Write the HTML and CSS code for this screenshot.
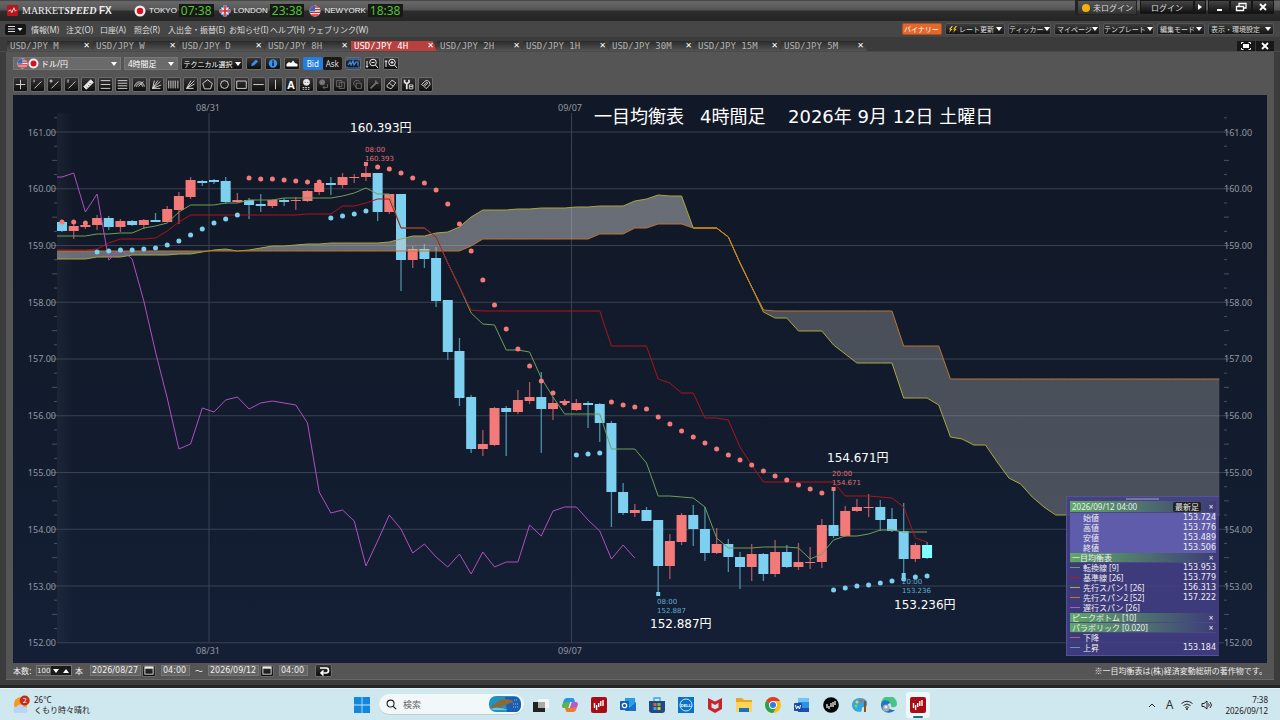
FILE: index.html
```html
<!DOCTYPE html>
<html lang="ja">
<head>
<meta charset="utf-8">
<title>MARKETSPEED FX</title>
<link rel="stylesheet" href="styles.css">
</head>
<body>
<svg class="defs" aria-hidden="true">
  <defs>
    <linearGradient id="edge"><stop offset="0" stop-color="#fff" stop-opacity=".04"/><stop offset="1" stop-color="#fff" stop-opacity="0"/></linearGradient>
    <symbol id="jp" viewBox="0 0 12 12"><circle cx="6" cy="6" r="5.5" fill="#eee"/><circle cx="6" cy="6" r="3.2" fill="#d3121d"/></symbol>
    <symbol id="us" viewBox="0 0 12 12"><circle cx="6" cy="6" r="5.5" fill="#f2f2f2"/><path d="M6 2h4.3M6 4.6h5.3M1 7.4h10.2M2.2 10h7.6" stroke="#d4262e" stroke-width="1.3"/><path d="M6 .5A5.500 5.500 0 0 0 .7 6.300H6z" fill="#3b64b4"/></symbol>
    <symbol id="gb" viewBox="0 0 12 12"><circle cx="6" cy="6" r="5.500" fill="#2b3f92"/><path d="M2.500 2.500l7 7M9.500 2.500l-7 7" stroke="#f4f4f4" stroke-width="1.500"/><path d="M6 .5v11M.5 6h11" stroke="#f4f4f4" stroke-width="3"/><path d="M6 .5v11M.5 6h11" stroke="#d3242f" stroke-width="1.600"/></symbol>
    <symbol id="ms" viewBox="0 0 16 16"><rect width="16" height="16" rx="2" fill="#a80d14"/><path d="M3.500 6v5M5.600 8v5M7.700 6v4M9.800 4v5M12 3v6" stroke="#fff" stroke-width="1.400"/></symbol>
    <symbol id="cal" viewBox="0 0 12 12"><rect x="1.500" y="2" width="9" height="8" fill="none" stroke="#ddd"/><path d="M1.500 3h9" stroke="#eee" stroke-width="2"/></symbol>
  </defs>
</svg>

<div class="window">
  <header class="titlebar">
    <svg class="logo" viewBox="0 0 16 16"><rect width="16" height="16" rx="2" fill="#b8151c"/><path d="M2 9l3-2 2 4 3-7 2 5 2-2" fill="none" stroke="#fff" stroke-width="1.200"/></svg>
    <h1 class="brand">MARKET<em>SPEED</em> <b>FX</b></h1>
    <div class="clocks">
      <div class="clock"><svg><use href="#jp"/></svg><span>TOKYO</span><time>07:38</time></div>
      <div class="clock"><svg><use href="#gb"/></svg><span>LONDON</span><time>23:38</time></div>
      <div class="clock"><svg><use href="#us"/></svg><span>NEWYORK</span><time>18:38</time></div>
    </div>
    <div class="login-status"><i class="lamp"></i>未ログイン</div>
    <button class="login">ログイン</button><button class="login-more" aria-label="ログインメニュー"><i class="tri-right"></i></button>
    <div class="winbtns">
      <button aria-label="最小化"><svg viewBox="0 0 12 10"><path d="M4 8h5" stroke="#fff" stroke-width="2"/></svg></button>
      <button aria-label="元に戻す"><svg viewBox="0 0 12 10"><path d="M4 4V1.500h7V6H8.500M1.500 4.500h7v4h-7z" fill="none" stroke="#fff" stroke-width="1.300"/></svg></button>
      <button aria-label="閉じる"><svg viewBox="0 0 12 10"><path d="M3 2l6 6M9 2L3 8" stroke="#fff" stroke-width="1.800"/></svg></button>
    </div>
  </header>

  <nav class="menubar">
    <button class="menu-main" aria-label="メニュー"><svg viewBox="0 0 20 10"><path d="M3 2.500h7M3 5h7M3 7.500h7" stroke="#ddd"/><path d="M12.500 4h5L15 7z" fill="#fff"/></svg></button>
    <div class="menus">
      <button>情報(M)</button><button>注文(O)</button><button>口座(A)</button><button>照会(R)</button><button>入出金・振替(E)</button><button>お知らせ(I)</button><button>ヘルプ(H)</button><button>ウェブリンク(W)</button>
    </div>
    <div class="quick">
      <button class="q0">バイナリー</button>
      <button class="q1"><svg viewBox="0 0 10 10"><path d="M4 1L1 5h1.700L1 9l4-4.600H3.300L5.500 1zM8.500 1l-3 4h1.700L5.500 9l4-4.600H7.800L10 1z" fill="#f7c21a"/></svg>レート更新<i class="tri"></i></button>
      <button class="q2">ティッカー<i class="tri"></i></button>
      <button class="q3">マイページ<i class="tri"></i></button>
      <button class="q4">テンプレート<i class="tri"></i></button>
      <button class="q5">編集モード<i class="tri"></i></button>
      <button class="q6">表示・環境設定<i class="tri"></i></button>
    </div>
  </nav>

  <div class="tabs">
    <div class="tab"><button>USD/JPY M</button><button aria-label="閉じる" class="x">✕</button></div>
    <div class="tab"><button>USD/JPY W</button><button aria-label="閉じる" class="x">✕</button></div>
    <div class="tab"><button>USD/JPY D</button><button aria-label="閉じる" class="x">✕</button></div>
    <div class="tab"><button>USD/JPY 8H</button><button aria-label="閉じる" class="x">✕</button></div>
    <div class="tab active"><button>USD/JPY 4H</button><button aria-label="閉じる" class="x">✕</button></div>
    <div class="tab"><button>USD/JPY 2H</button><button aria-label="閉じる" class="x">✕</button></div>
    <div class="tab"><button>USD/JPY 1H</button><button aria-label="閉じる" class="x">✕</button></div>
    <div class="tab"><button>USD/JPY 30M</button><button aria-label="閉じる" class="x">✕</button></div>
    <div class="tab"><button>USD/JPY 15M</button><button aria-label="閉じる" class="x">✕</button></div>
    <div class="tab"><button>USD/JPY 5M</button><button aria-label="閉じる" class="x">✕</button></div>
    <div class="tabtools">
      <button aria-label="最大化"><svg viewBox="0 0 18 10"><rect x="6" y="3" width="6" height="4" fill="#fff"/><path d="M4.500 3V1.500h2M11.500 1.500h2V3M13.500 7v1.500h-2M6.500 8.500h-2V7" fill="none" stroke="#fff"/></svg></button>
      <button aria-label="閉じる"><svg viewBox="0 0 18 10"><path d="M6 2l6 6M12 2L6 8" stroke="#fff" stroke-width="1.800"/></svg></button>
    </div>
  </div>

  <main class="panel">
    <div class="bar">
      <label class="pick pair"><svg><use href="#us"/></svg><svg><use href="#jp"/></svg><select aria-label="通貨ペア"><option>ドル/円</option></select><i class="tri"></i></label>
      <label class="pick span"><select aria-label="足種"><option>4時間足</option></select><i class="tri"></i></label>
      <button class="btn tech">テクニカル選択<i class="tri"></i></button>
      <button class="btn" aria-label="描画"><svg viewBox="0 0 16 13"><path d="M5 9l1-2.500 4-4L12 4.500l-4 4z" fill="#3f8ee8"/></svg></button>
      <button class="btn" aria-label="情報"><svg viewBox="0 0 16 13"><circle cx="8" cy="6.500" r="4.200" fill="#3794f0"/><path d="M8 5.500v3.500M8 3.500v1.200" stroke="#111" stroke-width="1.500"/></svg></button>
      <button class="btn" aria-label="チャート種類"><svg viewBox="0 0 16 13"><path d="M2.500 9.500V7L5 5l2 1 2-2.500L11 6l2.500 1v2.500z" fill="#fff"/></svg></button>
      <div class="pair-btn"><button class="on">Bid</button><button>Ask</button></div>
      <button class="btn" aria-label="比較"><svg viewBox="0 0 16 13"><path d="M2 3.500V2h12v1.500M2 9.500V11h12V9.500M3 8l2-3 1 3 2-4 1 4 2-3 2 0v4" fill="none" stroke="#3f8ee8" stroke-width="1.200"/></svg></button>
      <button class="btn" aria-label="縮小"><svg viewBox="0 0 16 13"><circle cx="9" cy="5.500" r="3.300" fill="none" stroke="#eee"/><path d="M7.500 5.500h3M11.500 8l2.500 3M3 4v6M2 9l1 1.500L4 9" stroke="#eee" fill="none"/></svg></button>
      <button class="btn" aria-label="拡大"><svg viewBox="0 0 16 13"><circle cx="9" cy="5.500" r="3.300" fill="none" stroke="#eee"/><path d="M7.500 5.500h3M9 4v3M11.500 8l2.500 3M3 10V4M2 5l1-1.500L4 5" stroke="#eee" fill="none"/></svg></button>
    </div>
    <div class="tools">
      <button class="btn" aria-label="十字線"><svg viewBox="0 0 15 15"><path d="M2 7.500h11M7.500 2v11"/></svg></button>
      <button class="btn" aria-label="線1"><svg viewBox="0 0 15 15"><path d="M4 12l8-8M3.500 2v3"/></svg></button>
      <button class="btn" aria-label="線2"><svg viewBox="0 0 15 15"><path d="M4 12l8-8M2.500 2.500h2v2h-2z"/></svg></button>
      <button class="btn" aria-label="線3"><svg viewBox="0 0 15 15"><path d="M4 12l8-8M2.500 2.500h2M2.500 4.500h2"/></svg></button>
      <button class="btn" aria-label="定規"><svg viewBox="0 0 15 15"><path d="M2 10l8-8 3 3-8 8z" fill="#eee"/><path d="M5 10l1 1M7 8l1 1M9 6l1 1" stroke="#333"/></svg></button>
      <button class="btn" aria-label="平行線"><svg viewBox="0 0 15 15"><path d="M2 3h11M2 7.500h11M2 12h11"/></svg></button>
      <button class="btn" aria-label="リトレースメント"><svg viewBox="0 0 15 15"><path d="M2 3h11M2 6h11M2 9h11M2 12h11"/></svg></button>
      <button class="btn" aria-label="アーク"><svg viewBox="0 0 15 15"><path d="M2 10a5.500 5.500 0 0 1 11 0M4 10a3.500 3.500 0 0 1 7 0M6 10l6-6"/></svg></button>
      <button class="btn" aria-label="ファン"><svg viewBox="0 0 15 15"><path d="M3 12L5 3M3 12l6-9M3 12l9-8M3 12l10-4M3 12h9"/></svg></button>
      <button class="btn" aria-label="タイムゾーン"><svg viewBox="0 0 15 15"><path d="M2 3v9M4.500 3v9M7 3v9M9.500 3v9M12.500 3v9"/></svg></button>
      <button class="btn" aria-label="ギャンファン"><svg viewBox="0 0 15 15"><path d="M3 12l5-9M3 12l9-9M3 12l9-5M3 12h8"/></svg></button>
      <button class="btn" aria-label="五角形"><svg viewBox="0 0 15 15"><path d="M7.500 2l5.500 4.300-2 6.200H4L2 6.300z"/></svg></button>
      <button class="btn" aria-label="円"><svg viewBox="0 0 15 15"><circle cx="7.500" cy="7.500" r="4.500"/></svg></button>
      <button class="btn" aria-label="四角形"><svg viewBox="0 0 15 15"><path d="M2 3.500h11v8.500H2z"/></svg></button>
      <button class="btn" aria-label="水平線"><svg viewBox="0 0 15 15"><path d="M1.500 7.500h12"/></svg></button>
      <button class="btn" aria-label="垂直線"><svg viewBox="0 0 15 15"><path d="M7.500 2v11"/></svg></button>
      <button class="btn letter">A</button>
      <button class="btn" aria-label="アイコン"><svg viewBox="0 0 15 15"><circle cx="7.500" cy="5" r="3.500" fill="#eee"/><path d="M5.500 5h1M8.500 5h1" stroke="#222"/><path d="M3 11h9M3 13h9" stroke-dasharray="2 1"/></svg></button>
      <button class="btn off" aria-label="色"><svg viewBox="0 0 15 15"><circle cx="6" cy="5" r="3" fill="#777"/><path d="M12 7v4H7M9 9l-2 2 2 2"/></svg></button>
      <button class="btn off" aria-label="複製"><svg viewBox="0 0 15 15"><path d="M3 3h6v7H3zM6 5h6v7H6z"/></svg></button>
      <button class="btn off" aria-label="全複製"><svg viewBox="0 0 15 15"><path d="M3 7a4 4 0 0 1 7-3M3 7l4 5M6 6h6v6H6z"/></svg></button>
      <button class="btn off" aria-label="設定"><svg viewBox="0 0 15 15"><path d="M3 12l6-6M9 3v3h3" stroke-width="2"/></svg></button>
      <button class="btn" aria-label="消去"><svg viewBox="0 0 15 15"><path d="M2.500 8.500l5.500-6 4.500 3-5.500 7-4.500-2zM5 6l4.500 3.500"/></svg></button>
      <button class="btn" aria-label="一覧設定"><svg viewBox="0 0 15 15"><path d="M3 2v3l2.500 1.500V13M8 2v3L5.500 6.500" stroke-width="2"/><path d="M8.500 8h4v4.500h-4zM8.500 10h4"/></svg></button>
      <button class="btn" aria-label="マグネット"><svg viewBox="0 0 15 15"><path d="M3 7.500l4-4q3-2 5 1t-1 5l-3 3M5 9l4-4q1 0 1 1l-4 4M3 7.500L5 9M6 10l2 2"/></svg></button>
    </div>

    <section class="chart">
      <svg class="plot" viewBox="13 95 1254 568" role="img" aria-label="USD/JPY 4時間足チャート">
        <g id="grid"></g>
        <g id="candles"></g>
        <g id="cloud"></g>
        <g id="lines"></g>
        <g id="dots"></g>
        <g class="axis left">
          <text x="56" y="136">161.00</text><text x="56" y="192">160.00</text><text x="56" y="249">159.00</text><text x="56" y="306">158.00</text><text x="56" y="362">157.00</text><text x="56" y="419">156.00</text><text x="56" y="476">155.00</text><text x="56" y="533">154.00</text><text x="56" y="590">153.00</text><text x="56" y="646">152.00</text>
        </g>
        <g class="axis right">
          <text x="1224" y="136">161.00</text><text x="1224" y="192">160.00</text><text x="1224" y="249">159.00</text><text x="1224" y="306">158.00</text><text x="1224" y="362">157.00</text><text x="1224" y="419">156.00</text><text x="1224" y="476">155.00</text><text x="1224" y="533">154.00</text><text x="1224" y="590">153.00</text><text x="1224" y="646">152.00</text>
        </g>
        <g class="axis mid">
          <text x="208" y="111">08/31</text><text x="570" y="111">09/07</text><text x="208" y="654">08/31</text><text x="570" y="654">09/07</text>
        </g>
        <g class="peak up"><text x="365" y="152">08:00</text><text x="365" y="161">160.393</text><text x="832" y="476">20:00</text><text x="832" y="485">154.671</text></g>
        <g class="peak down"><text x="657" y="604">08:00</text><text x="657" y="613">152.887</text><text x="902" y="584">20:00</text><text x="902" y="593">153.236</text></g>
        <g class="note"><text x="350" y="132">160.393円</text><text x="827" y="462">154.671円</text><text x="650" y="628">152.887円</text><text x="894" y="609">153.236円</text></g>
        <g class="heading"><text x="594" y="123">一目均衡表</text><text x="700" y="123">4時間足</text><text x="788" y="123">2026年 9月 12日 土曜日</text></g>
      </svg>
      <aside class="legend">
        <i class="grip"></i>
        <div class="cap first"><span>2026/09/12 04:00</span><button class="latest">最新足</button><button aria-label="閉じる">×</button></div>
        <dl class="ohlc">
          <div><dt>始値</dt><dd>153.724</dd></div><div><dt>高値</dt><dd>153.776</dd></div><div><dt>安値</dt><dd>153.489</dd></div><div><dt>終値</dt><dd>153.506</dd></div>
        </dl>
        <div class="cap"><span>一目均衡表</span><button aria-label="閉じる">×</button></div>
        <dl>
          <div class="k green"><dt>転換線 [9]</dt><dd>153.953</dd></div>
          <div class="k red"><dt>基準線 [26]</dt><dd>153.779</dd></div>
          <div class="k yellow"><dt>先行スパン1 [26]</dt><dd>156.313</dd></div>
          <div class="k orange"><dt>先行スパン2 [52]</dt><dd>157.222</dd></div>
          <div class="k violet"><dt>遅行スパン [26]</dt><dd></dd></div>
        </dl>
        <div class="cap"><span>ピークボトム [10]</span><button aria-label="閉じる">×</button></div>
        <div class="cap"><span>パラボリック [0.020]</span><button aria-label="閉じる">×</button></div>
        <dl>
          <div class="k pink"><dt>下降</dt><dd></dd></div>
          <div class="k blue"><dt>上昇</dt><dd>153.184</dd></div>
        </dl>
      </aside>
    </section>

    <form class="range">
      <label for="bars">本数:</label>
      <span class="spin"><input id="bars" value="100"><button type="button" aria-label="減らす"><i class="tri"></i></button><button type="button" aria-label="増やす"><i class="tri flip"></i></button></span>
      <span class="unit">本</span>
      <input class="date" aria-label="開始日" value="2026/08/27"><button type="button" class="btn cal" aria-label="開始日カレンダー"><svg><use href="#cal"/></svg></button>
      <input class="hour" aria-label="開始時刻" value="04:00">
      <span class="tilde">～</span>
      <input class="date" aria-label="終了日" value="2026/09/12"><button type="button" class="btn cal" aria-label="終了日カレンダー"><svg><use href="#cal"/></svg></button>
      <input class="hour" aria-label="終了時刻" value="04:00">
      <button type="button" class="btn back" aria-label="戻す"><svg viewBox="0 0 16 12"><path d="M4 3h6q2.500 0 2.500 2.500T10 8H6M7.500 5.500L5 8l2.500 2.500" fill="none" stroke="#fff" stroke-width="1.600"/></svg></button>
      <small>※一目均衡表は(株)経済変動総研の著作物です。</small>
    </form>
  </main>
</div>

<footer class="taskbar">
  <div class="weather">
    <svg viewBox="0 0 20 22"><circle cx="8.500" cy="10" r="7.500" fill="#f79a1c"/><path d="M4 20a3.500 3.500 0 0 1 0-7 4.500 4.500 0 0 1 8 0 3.500 3.500 0 0 1 1 7z" fill="#b9d3fa"/><circle cx="13" cy="6" r="5.500" fill="#c42b1c"/><text x="13" y="9" class="badge">2</text></svg>
    <p><b>26°C</b><span>くもり時々晴れ</span></p>
  </div>
  <div class="apps">
    <button aria-label="スタート"><svg viewBox="0 0 16 16"><path d="M0 0h7.600v7.600H0zM8.400 0H16v7.600H8.400zM0 8.400h7.600V16H0zM8.400 8.400H16V16H8.400z" fill="#1287dd"/></svg></button>
    <label class="search"><svg viewBox="0 0 12 12"><circle cx="5" cy="5" r="3.800" fill="none" stroke="#222" stroke-width="1.200"/><path d="M8 8l3 3" stroke="#222" stroke-width="1.400"/></svg><input placeholder="検索" aria-label="検索"><svg class="fish" viewBox="0 0 32 16"><rect width="32" height="16" rx="7" fill="#2191c6"/><path d="M16 1h12q4 3 4 8t-4 7H18z" fill="#1b5db0"/><path d="M2 11q6-5 9-7 8-3 14 2-2 1-4 1-4 3-9 3l2 4-5-3q-4 0-7 2z" fill="#8b6a3a"/><path d="M1 13q8-3 18 1h-14z" fill="#6cc5d8"/><path d="M25 4h4M24 8h6M24 11h5" stroke="#8bc4ee" stroke-dasharray="1 1"/></svg></label>
    <button aria-label="タスクビュー"><svg viewBox="0 0 16 16"><rect x="5" y="2" width="11" height="9" fill="#f4f4f4"/><rect y="5" width="12" height="10" fill="#222"/><rect x="5" y="5" width="7" height="6" fill="#aaa"/></svg></button>
    <button aria-label="Copilot"><svg viewBox="0 0 16 16"><path d="M5 1h6q1 0 2 4H8L6 11H2Q-1 11 1 6 2 1 5 1z" fill="#2596e8"/><path d="M1 6q-2 5 2 5h3l2-6H5z" fill="#62b53f"/><path d="M11 15H5q-1 0-2-4h5l2-6h4q3 0 1 5-1 5-4 5z" fill="#f07a2b"/><path d="M15 10q2-5-2-5h-3l-2 6z" fill="#b856d8"/></svg></button>
    <button aria-label="MARKETSPEED"><svg><use href="#ms"/></svg></button>
    <button aria-label="Outlook"><svg viewBox="0 0 16 16"><path d="M5 1h10v9H5z" fill="#2a9be6"/><path d="M5 6l5 3 6-4v9H5z" fill="#58c1f5"/><path d="M5 14l11-9v9z" fill="#1672c8"/><rect y="4" width="9" height="9" rx="1" fill="#0d5eb8"/><circle cx="4.500" cy="8.500" r="2.200" fill="none" stroke="#fff" stroke-width="1.300"/></svg></button>
    <button aria-label="Store"><svg viewBox="0 0 16 16"><path d="M5 4V1h6v3" fill="none" stroke="#36a3e8" stroke-width="1.300"/><path d="M0 4h16v9q0 3-3 3H3q-3 0-3-3z" fill="#204a80"/><path d="M4.500 6h3v3h-3z" fill="#e85b35"/><path d="M8.500 6h3v3h-3z" fill="#74bb3f"/><path d="M4.500 10h3v3h-3z" fill="#35a9ee"/><path d="M8.500 10h3v3h-3z" fill="#f5bd2d"/></svg></button>
    <button aria-label="Dell"><svg viewBox="0 0 16 16"><rect width="16" height="16" fill="#0b72c9"/><circle cx="8" cy="8" r="6" fill="none" stroke="#fff" stroke-width=".8"/><text x="8" y="10" class="dell">DELL</text></svg></button>
    <button aria-label="McAfee"><svg viewBox="0 0 16 16"><path d="M1 1l7 3.500L15 1v11l-7 4-7-4z" fill="#c8242e"/><path d="M4.500 6L8 8l3.500-2v4.500L8 12.300l-3.500-1.800z" fill="#d1e7ee"/></svg></button>
    <button aria-label="エクスプローラー"><svg viewBox="0 0 16 16"><path d="M0 1h6l2 2h8v12H0z" fill="#e6a61d"/><path d="M0 5h16v10H0z" fill="#fcd45c"/><path d="M3 15v-4h10v4z" fill="#1474c4"/></svg></button>
    <button aria-label="Chrome"><svg viewBox="0 0 16 16"><circle cx="8" cy="8" r="8" fill="#fbc116"/><path d="M8 8L1.100 4A8 8 0 0 1 15 4H8z" fill="#e33b2e"/><path d="M8 8L1.100 4A8 8 0 0 0 8 16l3.500-6z" fill="#2da04e"/><circle cx="8" cy="8" r="3.900" fill="#fff"/><circle cx="8" cy="8" r="3" fill="#3478e5"/></svg></button>
    <button aria-label="Word"><svg viewBox="0 0 16 16"><rect x="4" y="1" width="11" height="14" fill="#2b93e5"/><path d="M4 1h11v4H4z" fill="#70c4f7"/><path d="M4 11h11v4H4z" fill="#224caf"/><rect y="6" width="8" height="8" rx="1" fill="#174bab"/><path d="M1.500 8l1 4L4 9l1.500 3 1-4" fill="none" stroke="#fff"/></svg></button>
    <button aria-label="MARKETSPEED II"><svg viewBox="0 0 16 16"><circle cx="8" cy="8" r="7.800" fill="#050505"/><path d="M4 7v4M6 9v3M8 6v4M10 5v5M12 4v4" stroke="#fff" stroke-width="1.200"/></svg></button>
    <button aria-label="ペイント"><svg viewBox="0 0 16 16"><path d="M8 1c5 0 8 3 7 7-1 3-4 1-5 3s1 3-2 4C3 15 0 12 0 8s3-7 8-7z" fill="#35a7df"/><circle cx="5" cy="5" r="1.500" fill="#f7d13a"/><circle cx="9" cy="4" r="1.500" fill="#ef553a"/><circle cx="4" cy="9" r="1.500" fill="#7bd357"/><path d="M13 4v11" stroke="#8e4f22" stroke-width="2"/></svg></button>
    <button aria-label="Edge"><svg viewBox="0 0 16 16"><path d="M0 7a8 8 0 0 1 16 0c0 4-6 4-6 2 1-4-7-5-10-2z" fill="#4ac483"/><path d="M0 8c0-6 8-6 9-2-4 1-3 7 5 7-5 5-14 3-14-5z" fill="#1a77ca"/><circle cx="5" cy="11" r="3.500" fill="#aaa"/><circle cx="5" cy="10" r="1.500" fill="#eee"/></svg></button>
    <button aria-label="MARKETSPEED FX" class="current"><svg><use href="#ms"/></svg></button>
  </div>
  <div class="tray">
    <svg viewBox="0 0 12 12"><path d="M3 8l3-3 3 3" fill="none" stroke="#222"/></svg>
    <span class="ime">A</span>
    <svg viewBox="0 0 12 12"><path d="M.5 4.500q5.500-4.500 11 0M2.500 6.500q3.500-3 7 0M4.200 8.500q1.800-1.600 3.600 0" fill="none" stroke="#222"/><circle cx="6" cy="10" r="1" fill="#222"/></svg>
    <svg viewBox="0 0 12 12"><path d="M1 4.500h2l3-2.500v8L3 7.500H1zM7.500 4.500q1.500 1.500 0 3M9 3q3 3 0 6" fill="none" stroke="#222"/></svg>
    <p>7:38<br>2026/09/12</p>
  </div>
</footer>
<script src="script.js"></script>
</body>
</html>
```
FILE: styles.css
```css
* { box-sizing: border-box; }
body { margin: 0; min-height: 100vh; display: flex; flex-direction: column; background: #cfe7ee; font-family: "Noto Sans", "Noto Sans CJK JP", sans-serif; font-size: 8px; color: #ddd; }
button, input, select { font: inherit; color: inherit; margin: 0; padding: 0; border: 0; background: none; white-space: nowrap; }
input { min-width: 0; }
h1, p, dl, dd { margin: 0; }
.defs { position: absolute; width: 0; height: 0; }
svg { display: block; flex: none; }
.window { flex: 1; display: flex; flex-direction: column; background: #3c3c3c; border-bottom: 3px solid #252525; border-radius: 4px 4px 0 0; padding-bottom: 5px; }

.tri { flex: none; width: 0; height: 0; border: 3px solid transparent; border-top: 4px solid #fff; border-bottom: 0; }
.tri.flip { border-top: 0; border-bottom: 4px solid #fff; }
.tri-right { width: 0; height: 0; border: 3px solid transparent; border-left: 4px solid #fff; border-right: 0; }

.titlebar { height: 21px; display: flex; align-items: center; padding: 0 6px 0 7px; background: linear-gradient(#3b3b3b, #686868 8%, #555 45%, #2c2c2c 55%, #252525); }
.logo { width: 11px; height: 11px; }
.brand { margin-left: 4px; width: 112px; font: 10px "Liberation Serif", serif; color: #eee; white-space: nowrap; }
.brand em { font-weight: bold; }
.brand b { font-family: "Liberation Sans", sans-serif; }
.clocks { flex: 1; display: flex; gap: 5px; }
.clock { display: flex; align-items: center; font: 8px "Liberation Sans", sans-serif; color: #f0f0f0; }
.clock svg { width: 12px; height: 12px; margin-right: 3px; }
.clock time { margin-left: 2px; padding: 0 2px; font: 12px/13px "Noto Sans", sans-serif; color: #58c03c; background: #151a14; }
.login-status { display: flex; align-items: center; gap: 3px; width: 62px; height: 15px; padding-left: 4px; margin-bottom: 6px; background: linear-gradient(#555, #333); border: 1px solid #222; border-left: 3px solid #222; }
.lamp { width: 8px; height: 8px; border-radius: 50%; background: #f5ae10; }
.login, .login-more, .winbtns button { height: 14px; margin-bottom: 7px; background: linear-gradient(#444, #111); border: 1px solid #161616; }
.login { margin-left: 3px; width: 54px; }
.login-more { width: 12px; display: grid; place-items: center; }
.winbtns { display: flex; margin-left: 2px; }
.winbtns button { width: 22px; display: grid; place-items: center; }
.winbtns svg { width: 12px; height: 10px; }

.menubar { height: 16px; display: flex; align-items: center; padding: 0 6px 0 5px; background: #464646; }
.menu-main { width: 21px; height: 11px; background: #161616; border-radius: 2px; }
.menu-main svg { width: 20px; height: 10px; }
.menus { flex: 1; display: grid; grid-template-columns: 35px 34px 34px 34px 61px 41px 38px auto; margin-left: 5px; }
.menus button { text-align: left; }
.quick { display: flex; gap: 3px; font-size: 7px; }
.quick button { display: flex; align-items: center; justify-content: space-between; height: 12px; padding: 0 2px; background: linear-gradient(#3d3d3d, #141414); border: 1px solid #555; border-radius: 2px; }
.quick svg { width: 9px; height: 9px; }
.quick .q0 { width: 40px; padding: 0 1px; background: #e2692c; border-color: #b44d1c; color: #fff; }
.q1 { width: 60px; } .q2 { width: 43px; } .q3 { width: 46px; } .q4 { width: 51px; } .q5 { width: 48px; } .q6 { width: 66px; }
.quick .q2, .quick .q4 { padding: 0; }

.tabs { display: flex; height: 15px; padding: 4px 6px 0 7px; background: #3b3b3b; border-bottom: 1px solid #4a4a4a; }
.tab { width: 86px; display: flex; align-items: center; justify-content: space-between; padding: 0 3px; font: 9px/10px "DejaVu Sans Mono", monospace; color: #b2b2b2; background: linear-gradient(#2a2a2a, #535353); clip-path: polygon(0 0, 95% 0, 100% 100%, 0 100%); }
.tab .x { font: bold 8px/10px "DejaVu Sans", sans-serif; color: #fff; }
.tab.active { background: #b8403f; color: #fff; }
.tabtools { margin-left: auto; display: flex; gap: 1px; }
.tabtools button { width: 18px; height: 10px; background: #171717; }
.tabtools svg { width: 18px; height: 10px; }

.panel { flex: 1; display: flex; flex-direction: column; margin: 0 6px; padding: 5px 7px 0; background: #555; border-bottom: 1px solid #666; }
.bar { display: flex; height: 13px; gap: 3px; }
.btn { display: flex; align-items: center; justify-content: center; background: linear-gradient(#353535, #0e0e0e); border: 1px solid #6a6a6a; border-radius: 2px; }
.bar > .btn { width: 16px; }
.bar .btn svg { width: 16px; height: 13px; }
.pick { display: flex; align-items: center; background: #6a6a6a; border: 1px solid #777; padding: 0 3px; }
.pick svg { width: 11px; height: 11px; }
.pick select { flex: 1; min-width: 0; appearance: none; color: #fff; }
.pair { width: 108px; }
.pair select { padding-left: 2px; }
.span { width: 54px; }
.bar > .tech { width: 62px; font-size: 7px; gap: 2px; color: #fff; }
.pair-btn { display: flex; width: 39px; }
.pair-btn button { flex: 1; background: #191919; border-radius: 2px; }
.pair-btn .on { background: #237ee0; color: #fff; }
.tools { display: grid; grid-template-columns: repeat(25, 1fr); column-gap: 2px; width: 420px; margin: 7px 0 3px; }
.tools .btn { height: 15px; }
.tools svg { width: 13px; height: 13px; fill: none; stroke: #e4e4e4; }
.tools .off svg { stroke: #707070; }
.letter { font: bold 11px "Liberation Sans", sans-serif; color: #fff; }

.chart { position: relative; background: linear-gradient(#111827, #121b2c 50%, #141f36); }
.plot { width: 100%; height: auto; }
.axis { fill: #9498a0; font-size: 9px; }
.left { text-anchor: end; }
.mid { text-anchor: middle; }
.peak { font: 7px "DejaVu Sans", sans-serif; }
.up { fill: #e06c70; }
.down { fill: #5db0d0; }
.note, .heading { fill: #fff; font-family: "DejaVu Sans", "Noto Sans CJK JP", sans-serif; font-size: 12px; }
.heading { font-size: 18px; }

.legend { position: absolute; right: 48px; bottom: 7px; width: 153px; padding: 4px 3px 2px; background: rgba(68, 64, 136, .88); border: 1px solid #55529a; border-right: 0; font-size: 8px; line-height: 10px; color: #eee; }
.grip { position: absolute; top: 1px; left: 59px; width: 33px; height: 2px; background: #77759f; }
.cap { display: flex; align-items: center; height: 10px; padding-left: 2px; background: linear-gradient(90deg, #5fa866, #3d3b78); border-bottom: 1px solid #4a4985; white-space: nowrap; overflow: hidden; }
.cap.first { height: 12px; }
.cap span { flex: 1; }
.cap button { width: 10px; line-height: 8px; }
.cap .latest { width: 28px; margin-right: 5px; background: #222; border-radius: 2px; line-height: 10px; }
.legend dl div { display: flex; justify-content: space-between; height: 10px; padding-left: 13px; white-space: nowrap; overflow: hidden; }
.legend dd { font-family: "DejaVu Sans", sans-serif; }
.ohlc { background: #5f5cab; }
.legend .k { padding-left: 0; }
.k::before { content: ""; width: 10px; height: 1px; margin: 4px 3px 0 0; background: currentColor; }
.k dt { flex: 1; }
.k dt, .k dd { color: #eee; }
.green { color: #69a05c; } .red { color: #b01822; } .yellow { color: #b2ad3b; } .orange { color: #c57629; } .violet { color: #c04fd0; } .pink { color: #b06078; } .blue { color: #5f96c8; }

.range { display: flex; align-items: center; height: 15px; font: 8px "DejaVu Sans", "Noto Sans CJK JP", sans-serif; color: #eee; white-space: nowrap; }
.range > label { width: 23px; }
.spin { display: flex; width: 36px; height: 11px; border: 1px solid #777; }
.spin input { width: 14px; font-size: 7px; }
.spin button { width: 10px; display: grid; place-items: center; background: #1a1a1a; }
.unit { margin: 0 7px 0 3px; }
.date, .hour { height: 11px; background: #646464; border: 1px solid #777; }
.date { width: 51px; padding: 0 1px; }
.hour { width: 29px; padding: 0 1px; margin-left: 5px; }
.cal { width: 14px; height: 12px; margin-left: 1px; }
.cal svg { width: 12px; height: 11px; }
.tilde { margin: 0 5px; }
.back { width: 17px; height: 13px; margin-left: 7px; }
.back svg { width: 16px; height: 12px; }
.range small { margin-left: auto; font: 8px "Noto Sans CJK JP", sans-serif; }

.taskbar { height: 32px; flex: none; display: grid; grid-template-columns: 1fr auto 1fr; align-items: center; background: #cfe7ee; color: #222; border-top: 1px solid #e1f0f4; }
.weather { display: flex; align-items: center; gap: 3px; padding-left: 13px; line-height: 10px; }
.weather svg { width: 18px; height: 20px; }
.weather b, .weather span { display: block; font-weight: normal; }
.badge { font-size: 8px; fill: #fff; text-anchor: middle; }
.apps { display: flex; align-items: center; gap: 5px; }
.apps button { width: 24px; height: 26px; display: grid; place-items: center; position: relative; }
.apps button svg { width: 16px; height: 16px; }
.apps .current { background: #eef7f9; border-radius: 3px; }
.current::after { content: ""; position: absolute; bottom: 0; left: 7px; width: 10px; height: 2px; border-radius: 1px; background: #187585; }
.dell { font: bold 4px "Liberation Sans", sans-serif; fill: #fff; text-anchor: middle; }
.search { display: flex; align-items: center; gap: 6px; width: 145px; height: 21px; padding: 0 3px 0 7px; border-radius: 11px; background: #f2f8fa; border-bottom: 1px solid #bdd0d6; }
.search svg { width: 11px; height: 11px; }
.search .fish { width: 32px; height: 16px; }
.search input { flex: 1; font-size: 9px; color: #333; }
.search input::placeholder { color: #666; opacity: 1; }
.tray { display: flex; align-items: center; justify-content: flex-end; gap: 8px; padding-right: 12px; }
.tray svg { width: 12px; height: 12px; }
.tray p { margin-left: 4px; text-align: right; line-height: 11px; }
.ime { font-size: 12px; color: #333; }
```
FILE: script.js
```js
const X0 = 62, STEP = 11.69;
const x = i => X0 + STEP * i;
// [kind, high, body top, body bottom, low] on the price scale of the plot; u = rise, d = fall, n = newest bar
const bars = [
['d',222,222,231,232],['u',224,226,231,239],['u',222,225,227,229],['u',215,218,225,230],['d',216,218,227,230],['u',219,221,227,232],['d',220,221,225,226],['u',219,220,225,229],['d',213,220,222,222],['u',206,209,222,222],
['u',192,196,210,224],['u',177,180,197,199],['d',180,181,183,186],['d',179,180,182,184],['d',177,181,202,204],['u',193,200,202,203],['d',198,200,205,219],['d',194,204,206,212],['u',199,200,206,208],['d',198,200,202,206],
['u',197,200,201,210],['u',190,191,201,202],['u',180,183,192,195],['d',177,183,185,195],['u',173,177,185,188],['u',174,177,178,183],['u',164,173,177,181],['d',173,173,212,221],['u',194,194,212,214],['d',194,194,260,291],
['u',246,249,260,268],['d',244,249,259,268],['d',247,258,301,307],['d',300,300,352,360],['d',338,351,398,406],['d',395,397,449,453],['u',430,444,449,456],['u',407,408,445,446],['d',406,408,412,456],['u',390,400,412,414],
['u',382,397,401,404],['d',372,397,409,453],['u',397,403,409,420],['u',399,401,403,405],['u',399,403,410,411],['d',401,403,405,428],['d',403,404,423,442],['d',421,423,492,527],['d',483,492,513,515],['u',504,510,513,517],
['d',507,510,521,521],['d',520,520,566,594],['u',534,541,566,579],['u',513,515,542,545],['d',505,515,529,546],['d',507,529,553,561],['u',528,544,553,554],['d',539,544,557,572],['d',552,557,567,589],['u',544,554,567,581],
['d',553,554,574,581],['u',540,552,574,577],['d',545,552,567,568],['u',543,562,567,570],['u',547,562,563,569],['u',519,525,562,568],['d',489,525,536,538],['u',506,511,536,537],['u',499,507,511,512],['u',494,507,508,517],
['d',500,507,520,531],['d',508,519,531,532],['d',503,531,559,575],['u',543,545,559,562],['n',542,545,558,559]];

const tenkan = [236,236,236,234,234,233,233,228,226,223,212,205,205,205,203,203,200,200,200,198,198,198,198,198,196,193,188,194,194,228,228,228,237,263,287,313,324,325,350,350,352,378,397,414,414,414,414,449,449,449,463,496,496,497,498,507,538,548,548,548,547,547,547,548,559,554,540,536,536,534,530,530,532,532,532];
const kijun = [250,250,250,249,243,239,239,239,238,231,222,215,215,215,215,215,215,215,215,215,215,214,214,214,206,206,203,199,199,228,228,228,237,263,287,310,311,311,311,311,311,311,311,311,311,311,311,346,346,346,346,379,383,393,393,418,418,420,447,465,482,482,482,482,482,482,482,496,496,496,497,498,507,538,542];
const spanA = [259,259,259,257,257,257,255,255,255,255,254,254,252,250,249,251,250,248,246,246,245,244,244,243,243,243,243,243,242,239,236,236,233,232,227,217,210,210,210,209,209,208,208,208,207,207,206,206,206,201,199,195,196,196,228,228,228,237,263,287,312,318,318,331,331,331,345,354,363,363,363,363,398,398,398,405,437,439,445,445,462,478,484,497,507,515,515,515,515,515,515,515,515,515,515,515,515,515,515,515];
const spanB = [];
const flat = (from, to, y) => { for (let i = from; i <= to; i++) spanB[i] = y; };
flat(0, 34, 251); flat(35, 35, 246); flat(36, 45, 239); flat(46, 48, 234); flat(49, 50, 228); flat(51, 53, 224); flat(54, 56, 228);
spanB.push(237, 263, 287, 310); flat(61, 71, 311); flat(72, 75, 346); flat(76, 99, 379);

const sarDown = {0:[222,222,223],16:[178,179,179,180,181,182,182],27:[167,169,173,178,183,190,204,224,251,280,305,329,349,366,381,393,403],47:[402,405,407,409,417,424,431,437,443,449,455,460,465,471,476,480,485,489,493]};
const sarUp = {3:[252,251,250,250,249,248,245,241,235,229,223,219,215],23:[218,216,214,211],44:[455,454,453],66:[590,588,586,585,583,581,579,577,576]};

const put = (id, html) => { document.getElementById(id).innerHTML = html; };
const path = (d, stroke, width = 1, fill = 'none') => `<path d="${d}" stroke="${stroke}" stroke-width="${width}" fill="${fill}"/>`;

let major = '', minor = '';
for (let k = 0; k < 10; k++) major += `M57 ${132 + 56.75 * k}H1224`;
for (let k = -1; k < 36; k++) {
  const y = 132 + 56.75 / 4 * k, n = k % 2 ? 3 : 5;
  minor += `M${57 - n} ${y}h${n}M1224 ${y}h${n}`;
}
put('grid', '<rect x="57" y="113" width="17" height="530" fill="url(#edge)"/>' + path(major + 'M209 113V642M571.5 113V642', '#3a4250') + path(minor, '#4a505c'));

const body = { u: '#f47a7a', d: '#7dd0ef', n: '#80ffff' }, wick = { u: '#a85660', d: '#4e8eaa', n: '#4e8eaa' };
put('candles', bars.map(([k, h, t, b, l], i) =>
  `<path d="M${x(i)} ${h}V${l}" stroke="${wick[k]}" stroke-width="1.300"/><rect x="${x(i) - 5}" y="${t}" width="10" height="${Math.max(1, b - t)}" fill="${body[k]}"/>`).join(''));

const points = (ys, from = 0) => ys.map((y, i) => `${x(i + from)} ${y}`).join('L');
const area = (a, b) => {
  const top = spanA.slice(a, b + 1).map((y, i) => `${x(a + i)} ${y}`);
  const low = spanB.slice(a, b + 1).map((y, i) => `${x(a + i)} ${y}`).reverse();
  if (a === 0) { top.unshift('57 259'); low.push('57 251'); }
  return 'M' + top.concat(low).join('L') + 'Z';
};
put('cloud', path(area(0, 54), 'none', 0, 'rgba(200,200,200,.48)') + path(area(60, 99), 'none', 0, 'rgba(160,160,160,.4)'));

const lagging = bars.slice(25).map(([k, , t, b]) => k === 'u' ? t : b);
const line = (ys, color) => path(`M57 ${ys[0]}L${points(ys)}`, color);
put('lines', line(spanA, '#aaa63e') + line(spanB, '#b9752f') + path('M' + points(spanB.slice(54, 61), 54), '#d28a14') + line(tenkan, '#6f9f59') + line(kijun, '#b01218') + line(lagging, '#b04fc0'));

const dots = (groups, color) => Object.entries(groups).map(([start, ys]) =>
  ys.map((y, i) => `<circle cx="${x(+start + i)}" cy="${y}" r="2.500" fill="${color}"/>`).join('')).join('');
const square = (i, y, color) => `<rect x="${x(i) - 2}" y="${y - 2}" width="4" height="4" fill="${color}"/>`;
put('dots', dots(sarDown, body.u) + dots(sarUp, body.d) + square(26, 164, body.u) + square(66, 489, body.u) + square(51, 594, body.d) + square(72, 575, body.d));
```
